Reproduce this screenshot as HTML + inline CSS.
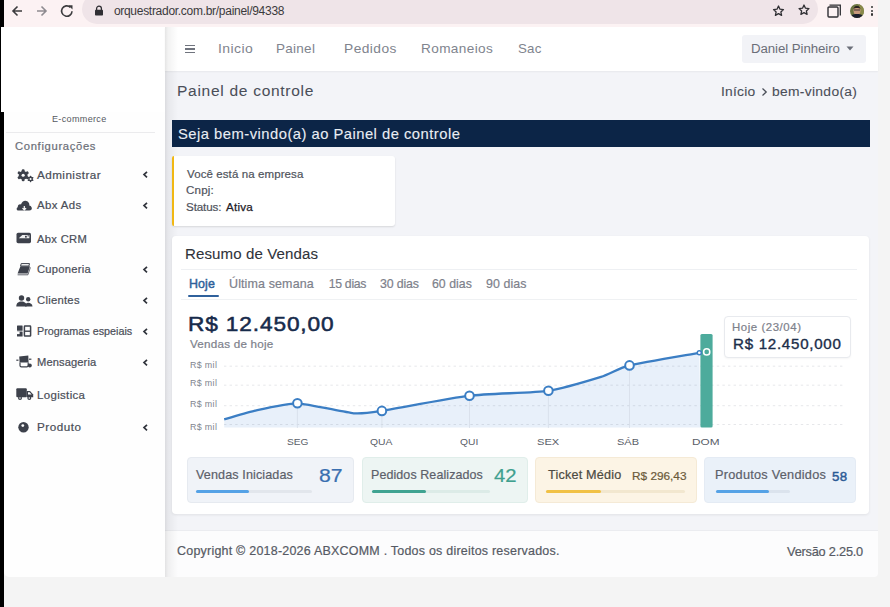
<!DOCTYPE html>
<html><head><meta charset="utf-8"><style>
html,body{margin:0;padding:0}
body{width:890px;height:607px;overflow:hidden;position:relative;background:#f4f4f4;font-family:'Liberation Sans',sans-serif;}
.t{position:absolute;white-space:nowrap;-webkit-text-stroke:0.2px currentColor}
</style></head><body>
<div style="position:absolute;left:0px;top:0px;width:878px;height:27px;background:#fcf2f3"></div>
<div style="position:absolute;left:82px;top:-6px;width:736px;height:29.5px;background:#efe4e8;border-radius:15px"></div>
<div style="position:absolute;left:0px;top:0px;width:4px;height:27px;background:#000"></div>
<svg style="position:absolute;left:9px;top:4px" width="16" height="14" viewBox="0 0 16 14"><path d="M13 7H4M8.5 2.5L4 7l4.5 4.5" fill="none" stroke="#3c3c3e" stroke-width="1.6"/></svg>
<svg style="position:absolute;left:34px;top:4px" width="16" height="14" viewBox="0 0 16 14"><path d="M3 7h9M7.5 2.5L12 7l-4.5 4.5" fill="none" stroke="#8e8b90" stroke-width="1.6"/></svg>
<svg style="position:absolute;left:59px;top:3px" width="16" height="16" viewBox="0 0 16 16"><path d="M13 8.2A5.2 5.2 0 1 1 11.4 4.3" fill="none" stroke="#3c3c3e" stroke-width="1.6"/><path d="M9.3 2.2h4.2v4.2z" fill="#3c3c3e"/></svg>
<svg style="position:absolute;left:94px;top:5px" width="10" height="11" viewBox="0 0 10 11"><path d="M2.6 5V3.6a2.4 2.4 0 0 1 4.8 0V5" fill="none" stroke="#2f2e33" stroke-width="1.3"/><rect x="1" y="4.8" width="8" height="5.8" rx="0.8" fill="#2f2e33"/></svg>
<svg style="position:absolute;left:772px;top:5px" width="13" height="12" viewBox="0 0 12 12"><path d="M6 1l1.47 3.2 3.5.38-2.6 2.37.72 3.45L6 8.65 2.91 10.4l.72-3.45L1.03 4.58l3.5-.38z" fill="none" stroke="#303034" stroke-width="1.3" stroke-linejoin="round"/></svg>
<svg style="position:absolute;left:798px;top:4px" width="12" height="12" viewBox="0 0 12 12"><path d="M6 1l1.47 3.2 3.5.38-2.6 2.37.72 3.45L6 8.65 2.91 10.4l.72-3.45L1.03 4.58l3.5-.38z" fill="none" stroke="#303034" stroke-width="1.3" stroke-linejoin="round"/></svg>
<svg style="position:absolute;left:827px;top:4px" width="15" height="14" viewBox="0 0 15 14"><rect x="1" y="3" width="10" height="10" rx="1" fill="none" stroke="#303034" stroke-width="1.4"/><path d="M2.5 1.2H13.3V11.5" fill="none" stroke="#303034" stroke-width="1.3"/></svg>
<svg style="position:absolute;left:850px;top:3.7px" width="14" height="14" viewBox="0 0 14 14"><defs><clipPath id="av"><circle cx="7" cy="7" r="7"/></clipPath></defs><g clip-path="url(#av)"><rect width="14" height="14" fill="#6c7440"/><rect x="9" y="0" width="5" height="14" fill="#8a8a4a"/><path d="M3.5 6.5C3.5 3.5 5 2.5 7 2.5S10.5 3.5 10.5 6.5 9 11 7 11 3.5 9.5 3.5 6.5z" fill="#c8997c"/><path d="M3.5 5C4 2.5 5.5 2 7 2s3 .5 3.5 3C9 3.8 5 3.8 3.5 5z" fill="#2a2320"/><rect x="4" y="5.5" width="6" height="1" fill="#3a3030"/><path d="M0 14c0-3 3-4 7-4s7 1 7 4z" fill="#1b1e2c"/></g></svg>
<div style="position:absolute;left:871px;top:6.0px;width:2.4px;height:2.4px;background:#333;border-radius:50%"></div>
<div style="position:absolute;left:871px;top:9.5px;width:2.4px;height:2.4px;background:#333;border-radius:50%"></div>
<div style="position:absolute;left:871px;top:13.200000000000001px;width:2.4px;height:2.4px;background:#333;border-radius:50%"></div>
<div style="position:absolute;left:878px;top:0px;width:12px;height:607px;background:#f4f4f4"></div>
<div style="position:absolute;left:0px;top:27px;width:1px;height:85px;background:#000"></div>
<div style="position:absolute;left:1px;top:27px;width:164px;height:85px;background:#fff"></div>
<div style="position:absolute;left:0px;top:112px;width:4px;height:495px;background:#000"></div>
<div style="position:absolute;left:4px;top:112px;width:161px;height:465px;background:#fefefe;border-bottom-left-radius:5px"></div>
<div style="position:absolute;left:6px;top:132px;width:149px;height:1px;background:#ebebed"></div>
<div style="position:absolute;left:165px;top:70px;width:713px;height:460px;background:#f3f4f8"></div>
<div style="position:absolute;left:165px;top:27px;width:713px;height:44px;background:#fff;box-shadow:0 1px 1.5px rgba(0,0,0,0.05)"></div>
<div style="position:absolute;left:165px;top:530px;width:713px;height:47px;background:#fcfcfd;border-top:1px solid #ebecf0;box-sizing:border-box;border-bottom-right-radius:4px"></div>
<div style="position:absolute;left:165px;top:27px;width:14px;height:550px;background:linear-gradient(to right,rgba(0,0,0,0.10) 0,rgba(0,0,0,0.05) 3px,rgba(0,0,0,0) 13px)"></div>
<div style="position:absolute;left:184.5px;top:44.8px;width:10px;height:1.6px;background:#70747e"></div>
<div style="position:absolute;left:184.5px;top:48.3px;width:10px;height:1.6px;background:#70747e"></div>
<div style="position:absolute;left:184.5px;top:51.8px;width:10px;height:1.6px;background:#70747e"></div>
<div style="position:absolute;left:742px;top:35.3px;width:123.5px;height:27.5px;background:#f2f3f7;border-radius:3px"></div>
<svg style="position:absolute;left:846px;top:46px" width="8" height="5" viewBox="0 0 8 5"><path d="M0.5 0.5h7L4 4.5z" fill="#6a6e78"/></svg>
<svg style="position:absolute;left:761px;top:87px" width="7" height="10" viewBox="0 0 7 10"><path d="M1.5 1.5L5.2 5 1.5 8.5" fill="none" stroke="#4a4e58" stroke-width="1.3"/></svg>
<div style="position:absolute;left:172px;top:120px;width:698px;height:27px;background:#0c2547"></div>
<div style="position:absolute;left:172px;top:156px;width:223px;height:69.5px;background:#fff;border-radius:3px;box-shadow:0 1px 2px rgba(0,0,0,0.12)"></div>
<div style="position:absolute;left:172px;top:156px;width:2.4px;height:69.5px;background:#f1b813;border-radius:3px 0 0 3px"></div>
<div style="position:absolute;left:172px;top:235.6px;width:697px;height:278.4px;background:#fff;border-radius:4px;box-shadow:0 1px 3px rgba(0,0,0,0.08)"></div>
<div style="position:absolute;left:181px;top:269px;width:676px;height:1px;background:#eef0f3"></div>
<div style="position:absolute;left:181px;top:299px;width:676px;height:1px;background:#eff1f3"></div>
<div style="position:absolute;left:187.5px;top:295px;width:31px;height:2.2px;background:#2f619c;border-radius:1px"></div>
<div style="position:absolute;left:724px;top:315.5px;width:126.5px;height:42.5px;background:#fff;border:1px solid #e8eaee;border-radius:4px;box-sizing:border-box;box-shadow:0 1px 2px rgba(0,0,0,0.04)"></div>
<svg style="position:absolute;left:0;top:0" width="890" height="607"><path d="M224.2,419.4 C227.2,418.5 247.0,412.4 254.3,410.8 C261.6,409.2 287.5,403.1 297.4,403.3 C307.3,403.6 345.2,412.5 353.6,413.3 C362.1,414.1 370.3,412.7 381.9,410.9 C393.5,409.1 452.9,397.7 469.5,395.7 C486.1,393.7 535.2,392.7 548.4,390.8 C561.5,388.9 592.9,379.4 601,376.9 C609.1,374.4 619.7,367.8 629.5,365.4 C639.3,363.0 692.3,354.1 699.3,352.8 L700.4,427.6 L224.2,427.6 Z" fill="#e8f0fa"/><line x1="224" y1="366.2" x2="845" y2="366.2" stroke="rgba(60,70,90,0.13)" stroke-width="1" stroke-dasharray="2.4 3.2"/><line x1="224" y1="385.2" x2="845" y2="385.2" stroke="rgba(60,70,90,0.13)" stroke-width="1" stroke-dasharray="2.4 3.2"/><line x1="224" y1="405.7" x2="845" y2="405.7" stroke="rgba(60,70,90,0.13)" stroke-width="1" stroke-dasharray="2.4 3.2"/><line x1="224" y1="424.5" x2="845" y2="424.5" stroke="rgba(60,70,90,0.13)" stroke-width="1" stroke-dasharray="2.4 3.2"/><line x1="297.4" y1="403.3" x2="297.4" y2="428" stroke="#d5dde8" stroke-width="0.8"/><line x1="381.9" y1="410.9" x2="381.9" y2="428" stroke="#d5dde8" stroke-width="0.8"/><line x1="469.5" y1="395.7" x2="469.5" y2="428" stroke="#d5dde8" stroke-width="0.8"/><line x1="548.4" y1="390.8" x2="548.4" y2="428" stroke="#d5dde8" stroke-width="0.8"/><line x1="629.5" y1="365.4" x2="629.5" y2="428" stroke="#d5dde8" stroke-width="0.8"/><rect x="700.4" y="333.9" width="12.2" height="93.6" rx="1.5" fill="#4dab9c"/><path d="M224.2,419.4 C227.2,418.5 247.0,412.4 254.3,410.8 C261.6,409.2 287.5,403.1 297.4,403.3 C307.3,403.6 345.2,412.5 353.6,413.3 C362.1,414.1 370.3,412.7 381.9,410.9 C393.5,409.1 452.9,397.7 469.5,395.7 C486.1,393.7 535.2,392.7 548.4,390.8 C561.5,388.9 592.9,379.4 601,376.9 C609.1,374.4 619.7,367.8 629.5,365.4 C639.3,363.0 692.3,354.1 699.3,352.8" fill="none" stroke="#3b7ec4" stroke-width="2.3" stroke-linejoin="round"/><circle cx="297.4" cy="403.3" r="4.3" fill="#fff" stroke="#3b7ec4" stroke-width="2"/><circle cx="381.9" cy="410.9" r="4.3" fill="#fff" stroke="#3b7ec4" stroke-width="2"/><circle cx="469.5" cy="395.7" r="4.3" fill="#fff" stroke="#3b7ec4" stroke-width="2"/><circle cx="548.4" cy="390.8" r="4.3" fill="#fff" stroke="#3b7ec4" stroke-width="2"/><circle cx="629.5" cy="365.4" r="4.3" fill="#fff" stroke="#3b7ec4" stroke-width="2"/><circle cx="699.3" cy="352.8" r="2" fill="#fff" stroke="#3b7ec4" stroke-width="1.4"/><circle cx="706.7" cy="351.9" r="3.1" fill="none" stroke="#fff" stroke-width="1.5"/></svg>
<div style="position:absolute;left:186.8px;top:457px;width:167.1px;height:46px;background:#f0f3f8;border:1px solid #e6eaf0;border-radius:4px;box-sizing:border-box"></div>
<div style="position:absolute;left:196.3px;top:489.9px;width:115.30000000000001px;height:3.6px;background:#e2e6ec;border-radius:2px"></div>
<div style="position:absolute;left:196.3px;top:489.9px;width:52.39999999999998px;height:3.6px;background:#55a2e6;border-radius:2px"></div>
<div style="position:absolute;left:362px;top:457px;width:165.5px;height:46px;background:#edf5f3;border:1px solid #e0eeea;border-radius:4px;box-sizing:border-box"></div>
<div style="position:absolute;left:372px;top:489.9px;width:117.5px;height:3.6px;background:#dcebe7;border-radius:2px"></div>
<div style="position:absolute;left:372px;top:489.9px;width:54px;height:3.6px;background:#3fa391;border-radius:2px"></div>
<div style="position:absolute;left:535px;top:457px;width:162px;height:46px;background:#fcf4e5;border:1px solid #f5ead6;border-radius:4px;box-sizing:border-box"></div>
<div style="position:absolute;left:546.3px;top:489.9px;width:138.70000000000005px;height:3.6px;background:#f2e7cf;border-radius:2px"></div>
<div style="position:absolute;left:546.3px;top:489.9px;width:54.90000000000009px;height:3.6px;background:#f1c145;border-radius:2px"></div>
<div style="position:absolute;left:704px;top:457px;width:151.5px;height:46px;background:#eaf1f9;border:1px solid #e4ebf4;border-radius:4px;box-sizing:border-box"></div>
<div style="position:absolute;left:715.7px;top:489.9px;width:73.89999999999998px;height:3.6px;background:#dbe3ed;border-radius:2px"></div>
<div style="position:absolute;left:715.7px;top:489.9px;width:53.299999999999955px;height:3.6px;background:#55a2e6;border-radius:2px"></div>
<svg style="position:absolute;left:16px;top:167.5px" width="19" height="15" viewBox="0 0 20 16">
<g fill="#3d414b"><circle cx="7.5" cy="7.7" r="4.6"/>
<rect x="6" y="1.2" width="3" height="13" rx="1.2"/>
<rect x="6" y="1.2" width="3" height="13" rx="1.2" transform="rotate(60 7.5 7.7)"/>
<rect x="6" y="1.2" width="3" height="13" rx="1.2" transform="rotate(-60 7.5 7.7)"/>
<circle cx="15.4" cy="11.7" r="2.5"/>
<rect x="14.6" y="8.3" width="1.6" height="6.8" rx="0.6"/>
<rect x="14.6" y="8.3" width="1.6" height="6.8" rx="0.6" transform="rotate(60 15.4 11.7)"/>
<rect x="14.6" y="8.3" width="1.6" height="6.8" rx="0.6" transform="rotate(-60 15.4 11.7)"/></g>
<circle cx="7.5" cy="7.7" r="1.7" fill="#fefefe"/><circle cx="15.4" cy="11.7" r="1.1" fill="#fefefe"/></svg>
<svg style="position:absolute;left:16px;top:199px" width="17" height="12" viewBox="0 0 17 12">
<path d="M2.5 11.5C0.5 11.5 0 9 1.8 8.2 1.5 6 3.5 4.8 5 5.6 5.8 2 9 0.8 11.3 2.2 13 3.2 13.6 5 13.3 6.4 15.5 6.8 16.5 9 15.5 10.6 15 11.3 14.3 11.5 13.5 11.5z" fill="#3d414b"/>
<path d="M8.3 7v4M6.5 9.2L8.3 11l1.8-1.8" stroke="#fefefe" stroke-width="1.2" fill="none"/></svg>
<svg style="position:absolute;left:16px;top:232px" width="16" height="12" viewBox="0 0 16 12">
<rect x="0.5" y="0.8" width="14.5" height="10.4" rx="1.6" fill="#3d414b"/><path d="M2.8 6.3L6.3 3H13.4V6.3z" fill="#fefefe" opacity="0.92"/><rect x="9" y="3.8" width="1.8" height="1.8" fill="#3d414b"/><rect x="11.6" y="3.2" width="1.2" height="1.2" fill="#3d414b"/></svg>
<svg style="position:absolute;left:16px;top:263px" width="16" height="13" viewBox="0 0 16 13">
<path d="M5.2 0.6h8.3l-0.6 2.4H4.6z" fill="none" stroke="#3d414b" stroke-width="1"/>
<path d="M4.4 3.2h9.6l-2.4 7.2H1.6z" fill="#3d414b"/>
<path d="M1.6 11.8h10.3l2.5-7.4" fill="none" stroke="#3d414b" stroke-width="1" opacity="0.8"/></svg>
<svg style="position:absolute;left:16px;top:295px" width="17" height="12" viewBox="0 0 17 12">
<g fill="#3d414b"><circle cx="5.5" cy="3" r="2.7"/><path d="M0.3 11.5C0.3 8 2.5 6.6 5.5 6.6S10.7 8 10.7 11.5z"/>
<circle cx="12.2" cy="4.3" r="2.2"/><path d="M9 11.5C9 9 10.3 7.8 12.2 7.8S16.5 9 16.5 11.5z"/></g></svg>
<svg style="position:absolute;left:16px;top:325px" width="16" height="12" viewBox="0 0 16 12">
<g fill="#3d414b"><rect x="1" y="0.5" width="5.6" height="5.2" rx="0.5"/><rect x="1" y="6.5" width="5.6" height="5" rx="0.5"/></g>
<rect x="1" y="6.5" width="2.6" height="2.6" fill="#fefefe"/>
<rect x="8.4" y="1.1" width="6.2" height="10" rx="0.6" fill="none" stroke="#3d414b" stroke-width="1.5"/><rect x="8.4" y="5.5" width="6.2" height="1.4" fill="#3d414b"/></svg>
<svg style="position:absolute;left:16px;top:354.5px" width="17" height="13" viewBox="0 0 17 13">
<g fill="#3d414b"><path d="M3.2 1.6L12.3 0.5 12.6 7.4H3.6z"/><circle cx="13.8" cy="10.6" r="2"/><rect x="0.3" y="4.6" width="2.2" height="1.2"/><rect x="13" y="3.6" width="2.4" height="1.2"/></g>
<path d="M4 7.4V10.4Q4 11.8 5.4 11.8H10.8Q12.2 11.8 12.2 10.4V7.4" fill="none" stroke="#3d414b" stroke-width="1.2"/></svg>
<svg style="position:absolute;left:16px;top:388px" width="18" height="12" viewBox="0 0 18 12">
<g fill="#3d414b"><rect x="0.3" y="0.3" width="10.5" height="9" rx="1"/><path d="M10.8 3h3.2l3.2 3.5v2.8h-6.4z"/><circle cx="4" cy="10" r="2"/><circle cx="13.3" cy="10" r="2"/></g>
<circle cx="4" cy="10" r="0.8" fill="#fefefe"/><circle cx="13.3" cy="10" r="0.8" fill="#fefefe"/><path d="M12 4.2h1.6l2 2.2H12z" fill="#fefefe"/></svg>
<svg style="position:absolute;left:18px;top:422px" width="12" height="11" viewBox="0 0 12 11"><circle cx="5.5" cy="5.3" r="5.2" fill="#3d414b"/><circle cx="4.8" cy="3.6" r="1.4" fill="#fefefe"/></svg>
<svg style="position:absolute;left:141.5px;top:171.3px" width="7" height="7.2" viewBox="0 0 7 7.2"><path d="M5 0.8L2 3.6 5 6.4" fill="none" stroke="#30343c" stroke-width="1.7"/></svg>
<svg style="position:absolute;left:141.5px;top:201.6px" width="7" height="7.2" viewBox="0 0 7 7.2"><path d="M5 0.8L2 3.6 5 6.4" fill="none" stroke="#30343c" stroke-width="1.7"/></svg>
<svg style="position:absolute;left:141.5px;top:265.7px" width="7" height="7.2" viewBox="0 0 7 7.2"><path d="M5 0.8L2 3.6 5 6.4" fill="none" stroke="#30343c" stroke-width="1.7"/></svg>
<svg style="position:absolute;left:141.5px;top:296.9px" width="7" height="7.2" viewBox="0 0 7 7.2"><path d="M5 0.8L2 3.6 5 6.4" fill="none" stroke="#30343c" stroke-width="1.7"/></svg>
<svg style="position:absolute;left:141.5px;top:327.59999999999997px" width="7" height="7.2" viewBox="0 0 7 7.2"><path d="M5 0.8L2 3.6 5 6.4" fill="none" stroke="#30343c" stroke-width="1.7"/></svg>
<svg style="position:absolute;left:141.5px;top:358.9px" width="7" height="7.2" viewBox="0 0 7 7.2"><path d="M5 0.8L2 3.6 5 6.4" fill="none" stroke="#30343c" stroke-width="1.7"/></svg>
<svg style="position:absolute;left:141.5px;top:423.59999999999997px" width="7" height="7.2" viewBox="0 0 7 7.2"><path d="M5 0.8L2 3.6 5 6.4" fill="none" stroke="#30343c" stroke-width="1.7"/></svg>
<div class="t" style="left:113.9px;top:5.3px;font-size:12.0px;line-height:12.0px;letter-spacing:-0.287px;font-weight:normal;color:#3b3a3c;-webkit-text-stroke:0;">orquestrador.com.br/painel/94338</div>
<div class="t" style="left:217.63px;top:42.3px;font-size:13.0px;line-height:13.0px;letter-spacing:0.4px;font-weight:normal;color:#80848e;-webkit-text-stroke:0px currentColor;transform:scaleX(1.0741);transform-origin:0 0;">Inicio</div>
<div class="t" style="left:275.56px;top:42.3px;font-size:13.0px;line-height:13.0px;letter-spacing:0.26px;font-weight:normal;color:#80848e;-webkit-text-stroke:0px currentColor;transform:scaleX(1.0386);transform-origin:0 0;">Painel</div>
<div class="t" style="left:343.54px;top:42.3px;font-size:13.0px;line-height:13.0px;letter-spacing:0.425px;font-weight:normal;color:#80848e;-webkit-text-stroke:0px currentColor;transform:scaleX(1.0587);transform-origin:0 0;">Pedidos</div>
<div class="t" style="left:420.95px;top:42.3px;font-size:13.0px;line-height:13.0px;letter-spacing:0.358px;font-weight:normal;color:#80848e;-webkit-text-stroke:0px currentColor;transform:scaleX(1.0462);transform-origin:0 0;">Romaneios</div>
<div class="t" style="left:517.68px;top:42.3px;font-size:13.0px;line-height:13.0px;letter-spacing:0.22px;font-weight:normal;color:#80848e;-webkit-text-stroke:0px currentColor;transform:scaleX(1.0214);transform-origin:0 0;">Sac</div>
<div class="t" style="left:751.0px;top:42.4px;font-size:13.25px;line-height:13.25px;letter-spacing:-0.071px;font-weight:normal;color:#6a6e78;-webkit-text-stroke:0px currentColor;">Daniel Pinheiro</div>
<div class="t" style="left:177.09px;top:83.8px;font-size:14.0px;line-height:14.0px;letter-spacing:0.642px;font-weight:normal;color:#4a4e58;-webkit-text-stroke:0.05px currentColor;transform:scaleX(1.109);transform-origin:0 0;">Painel de controle</div>
<div class="t" style="left:721.36px;top:85.2px;font-size:13.25px;line-height:13.25px;letter-spacing:0.24px;font-weight:normal;color:#4a4e58;-webkit-text-stroke:0.1px currentColor;transform:scaleX(1.0417);transform-origin:0 0;">Início</div>
<div class="t" style="left:771.56px;top:85.2px;font-size:13.25px;line-height:13.25px;letter-spacing:0.296px;font-weight:normal;color:#4a4e58;-webkit-text-stroke:0.1px currentColor;transform:scaleX(1.0442);transform-origin:0 0;">bem-vindo(a)</div>
<div class="t" style="left:177.73px;top:127.7px;font-size:13.75px;line-height:13.75px;letter-spacing:0.446px;font-weight:normal;color:#e9edf3;-webkit-text-stroke:0.1px currentColor;transform:scaleX(1.0746);transform-origin:0 0;">Seja bem-vindo(a) ao Painel de controle</div>
<div class="t" style="left:186.7px;top:169.1px;font-size:11.25px;line-height:11.25px;letter-spacing:0.093px;font-weight:normal;color:#4f535c;transform:scaleX(1.0232);transform-origin:0 0;">Você está na empresa</div>
<div class="t" style="left:186.4px;top:185.3px;font-size:11.25px;line-height:11.25px;letter-spacing:0.182px;font-weight:normal;color:#4f535c;transform:scaleX(1.0288);transform-origin:0 0;">Cnpj:</div>
<div class="t" style="left:186.07px;top:201.7px;font-size:11.25px;line-height:11.25px;letter-spacing:-0.113px;font-weight:normal;color:#4f535c;transform:scaleX(1.0333);transform-origin:0 0;">Status:</div>
<div class="t" style="left:225.6px;top:201.7px;font-size:11.25px;line-height:11.25px;letter-spacing:0.217px;font-weight:normal;color:#1f2229;-webkit-text-stroke:0.25px currentColor;transform:scaleX(1.036);transform-origin:0 0;">Ativa</div>
<div class="t" style="left:184.68px;top:246.7px;font-size:14.75px;line-height:14.75px;letter-spacing:0.108px;font-weight:normal;color:#2f333b;-webkit-text-stroke:0.1px currentColor;transform:scaleX(1.0201);transform-origin:0 0;">Resumo de Vendas</div>
<div class="t" style="left:188.79px;top:277.5px;font-size:12.25px;line-height:12.25px;letter-spacing:0.115px;font-weight:normal;color:#2f5f9a;-webkit-text-stroke:0.45px currentColor;transform:scaleX(1.0146);transform-origin:0 0;">Hoje</div>
<div class="t" style="left:228.98px;top:277.5px;font-size:12.25px;line-height:12.25px;letter-spacing:0.123px;font-weight:normal;color:#7d818b;transform:scaleX(1.0185);transform-origin:0 0;">Última semana</div>
<div class="t" style="left:328.7px;top:277.5px;font-size:12.25px;line-height:12.25px;letter-spacing:-0.283px;font-weight:normal;color:#7d818b;">15 dias</div>
<div class="t" style="left:379.84px;top:277.5px;font-size:12.25px;line-height:12.25px;letter-spacing:-0.157px;font-weight:normal;color:#7d818b;transform:scaleX(1.0092);transform-origin:0 0;">30 dias</div>
<div class="t" style="left:432.05px;top:277.5px;font-size:12.25px;line-height:12.25px;letter-spacing:0.025px;font-weight:normal;color:#7d818b;transform:scaleX(1.0038);transform-origin:0 0;">60 dias</div>
<div class="t" style="left:486.0px;top:277.5px;font-size:12.25px;line-height:12.25px;letter-spacing:0.082px;font-weight:normal;color:#7d818b;transform:scaleX(1.0128);transform-origin:0 0;">90 dias</div>
<div class="t" style="left:187.54px;top:313.2px;font-size:21.0px;line-height:21.0px;letter-spacing:0.814px;font-weight:normal;color:#172b4b;-webkit-text-stroke:0.55px currentColor;transform:scaleX(1.0778);transform-origin:0 0;">R$ 12.450,00</div>
<div class="t" style="left:189.8px;top:339.1px;font-size:11.25px;line-height:11.25px;letter-spacing:0.211px;font-weight:normal;color:#7d818b;transform:scaleX(1.037);transform-origin:0 0;">Vendas de hoje</div>
<div class="t" style="left:190.0px;top:362.4px;font-size:8.25px;line-height:8.25px;letter-spacing:0.325px;font-weight:normal;color:#80848e;-webkit-text-stroke:0;transform:scaleX(1.0761);transform-origin:0 0;">R$ mil</div>
<div class="t" style="left:190.0px;top:380.2px;font-size:8.25px;line-height:8.25px;letter-spacing:0.325px;font-weight:normal;color:#80848e;-webkit-text-stroke:0;transform:scaleX(1.0761);transform-origin:0 0;">R$ mil</div>
<div class="t" style="left:190.0px;top:401.2px;font-size:8.25px;line-height:8.25px;letter-spacing:0.325px;font-weight:normal;color:#80848e;-webkit-text-stroke:0;transform:scaleX(1.0761);transform-origin:0 0;">R$ mil</div>
<div class="t" style="left:190.0px;top:423.6px;font-size:8.25px;line-height:8.25px;letter-spacing:0.325px;font-weight:normal;color:#80848e;-webkit-text-stroke:0;transform:scaleX(1.0761);transform-origin:0 0;">R$ mil</div>
<div class="t" style="left:286.76px;top:437.2px;font-size:9.75px;line-height:9.75px;letter-spacing:0px;font-weight:normal;color:#5a5e68;-webkit-text-stroke:0;transform:scaleX(1.0421);transform-origin:0 0;">SEG</div>
<div class="t" style="left:370.2px;top:437.2px;font-size:9.75px;line-height:9.75px;letter-spacing:0px;font-weight:normal;color:#5a5e68;-webkit-text-stroke:0;transform:scaleX(1.0619);transform-origin:0 0;">QUA</div>
<div class="t" style="left:459.7px;top:437.2px;font-size:9.75px;line-height:9.75px;letter-spacing:0px;font-weight:normal;color:#5a5e68;-webkit-text-stroke:0;transform:scaleX(1.0529);transform-origin:0 0;">QUI</div>
<div class="t" style="left:536.86px;top:437.2px;font-size:9.75px;line-height:9.75px;letter-spacing:0px;font-weight:normal;color:#5a5e68;-webkit-text-stroke:0;transform:scaleX(1.1389);transform-origin:0 0;">SEX</div>
<div class="t" style="left:617.27px;top:437.2px;font-size:9.75px;line-height:9.75px;letter-spacing:0px;font-weight:normal;color:#5a5e68;-webkit-text-stroke:0;transform:scaleX(1.1278);transform-origin:0 0;">SÁB</div>
<div class="t" style="left:692.19px;top:437.2px;font-size:9.75px;line-height:9.75px;letter-spacing:0px;font-weight:normal;color:#5a5e68;-webkit-text-stroke:0;transform:scaleX(1.2095);transform-origin:0 0;">DOM</div>
<div class="t" style="left:731.99px;top:323.2px;font-size:10.25px;line-height:10.25px;letter-spacing:0.507px;font-weight:normal;color:#7d818b;transform:scaleX(1.1127);transform-origin:0 0;">Hoje (23/04)</div>
<div class="t" style="left:732.8px;top:338.4px;font-size:13.75px;line-height:13.75px;letter-spacing:0.664px;font-weight:normal;color:#1c2e4a;-webkit-text-stroke:0.35px currentColor;transform:scaleX(1.0983);transform-origin:0 0;">R$ 12.450,000</div>
<div class="t" style="left:195.7px;top:469.2px;font-size:12.25px;line-height:12.25px;letter-spacing:0.107px;font-weight:normal;color:#5c606a;transform:scaleX(1.0277);transform-origin:0 0;">Vendas Iniciadas</div>
<div class="t" style="left:318.99px;top:468.0px;font-size:17.5px;line-height:17.5px;letter-spacing:0px;font-weight:normal;color:#3a6fb0;transform:scaleX(1.2111);transform-origin:0 0;">87</div>
<div class="t" style="left:370.98px;top:469.2px;font-size:12.25px;line-height:12.25px;letter-spacing:0.101px;font-weight:normal;color:#5c606a;transform:scaleX(1.0164);transform-origin:0 0;">Pedidos Realizados</div>
<div class="t" style="left:494.2px;top:468.0px;font-size:17.5px;line-height:17.5px;letter-spacing:0px;font-weight:normal;color:#3fa08f;transform:scaleX(1.1579);transform-origin:0 0;">42</div>
<div class="t" style="left:547.8px;top:469.2px;font-size:12.25px;line-height:12.25px;letter-spacing:0.185px;font-weight:normal;color:#4d4a42;transform:scaleX(1.0304);transform-origin:0 0;">Ticket Médio</div>
<div class="t" style="left:631.77px;top:470.9px;font-size:11.5px;line-height:11.5px;letter-spacing:0px;font-weight:normal;color:#6b5a3a;transform:scaleX(1.0269);transform-origin:0 0;">R$ 296,43</div>
<div class="t" style="left:714.66px;top:469.2px;font-size:12.25px;line-height:12.25px;letter-spacing:0.241px;font-weight:normal;color:#5c606a;transform:scaleX(1.0392);transform-origin:0 0;">Produtos Vendidos</div>
<div class="t" style="left:832.1px;top:469.5px;font-size:13.25px;line-height:13.25px;letter-spacing:0.4px;font-weight:normal;color:#2a5a95;-webkit-text-stroke:0.45px currentColor;">58</div>
<div class="t" style="left:176.8px;top:545.3px;font-size:12.0px;line-height:12.0px;letter-spacing:0.221px;font-weight:normal;color:#565a64;transform:scaleX(1.039);transform-origin:0 0;">Copyright © 2018-2026 ABXCOMM . Todos os direitos reservados.</div>
<div class="t" style="left:787.1px;top:545.9px;font-size:12.75px;line-height:12.75px;letter-spacing:-0.217px;font-weight:normal;color:#565a64;">Versão 2.25.0</div>
<div class="t" style="left:51.84px;top:115.2px;font-size:8.5px;line-height:8.5px;letter-spacing:0.313px;font-weight:normal;color:#55585f;-webkit-text-stroke:0;transform:scaleX(1.0638);transform-origin:0 0;">E-commerce</div>
<div class="t" style="left:15.1px;top:142.1px;font-size:10.0px;line-height:10.0px;letter-spacing:0.589px;font-weight:normal;color:#6b6f78;transform:scaleX(1.1242);transform-origin:0 0;">Configurações</div>
<div class="t" style="left:37.2px;top:169.5px;font-size:10.75px;line-height:10.75px;letter-spacing:0.424px;font-weight:normal;color:#4a4e58;transform:scaleX(1.0852);transform-origin:0 0;">Administrar</div>
<div class="t" style="left:36.8px;top:199.9px;font-size:10.75px;line-height:10.75px;letter-spacing:0.362px;font-weight:normal;color:#4a4e58;transform:scaleX(1.059);transform-origin:0 0;">Abx Ads</div>
<div class="t" style="left:36.85px;top:233.6px;font-size:10.75px;line-height:10.75px;letter-spacing:0.296px;font-weight:normal;color:#4a4e58;transform:scaleX(1.0411);transform-origin:0 0;">Abx CRM</div>
<div class="t" style="left:37.3px;top:264.2px;font-size:10.75px;line-height:10.75px;letter-spacing:0.246px;font-weight:normal;color:#4a4e58;transform:scaleX(1.041);transform-origin:0 0;">Cuponeria</div>
<div class="t" style="left:37.3px;top:295.2px;font-size:10.75px;line-height:10.75px;letter-spacing:0.252px;font-weight:normal;color:#4a4e58;transform:scaleX(1.0474);transform-origin:0 0;">Clientes</div>
<div class="t" style="left:36.7px;top:325.7px;font-size:10.75px;line-height:10.75px;letter-spacing:0.006px;font-weight:normal;color:#4a4e58;transform:scaleX(1.0011);transform-origin:0 0;">Programas espeiais</div>
<div class="t" style="left:36.86px;top:357.1px;font-size:10.75px;line-height:10.75px;letter-spacing:0.107px;font-weight:normal;color:#4a4e58;transform:scaleX(1.0364);transform-origin:0 0;">Mensageria</div>
<div class="t" style="left:36.73px;top:389.6px;font-size:10.75px;line-height:10.75px;letter-spacing:0.323px;font-weight:normal;color:#4a4e58;transform:scaleX(1.0655);transform-origin:0 0;">Logistica</div>
<div class="t" style="left:36.71px;top:421.6px;font-size:10.75px;line-height:10.75px;letter-spacing:0.484px;font-weight:normal;color:#4a4e58;transform:scaleX(1.0851);transform-origin:0 0;">Produto</div>
</body></html>
